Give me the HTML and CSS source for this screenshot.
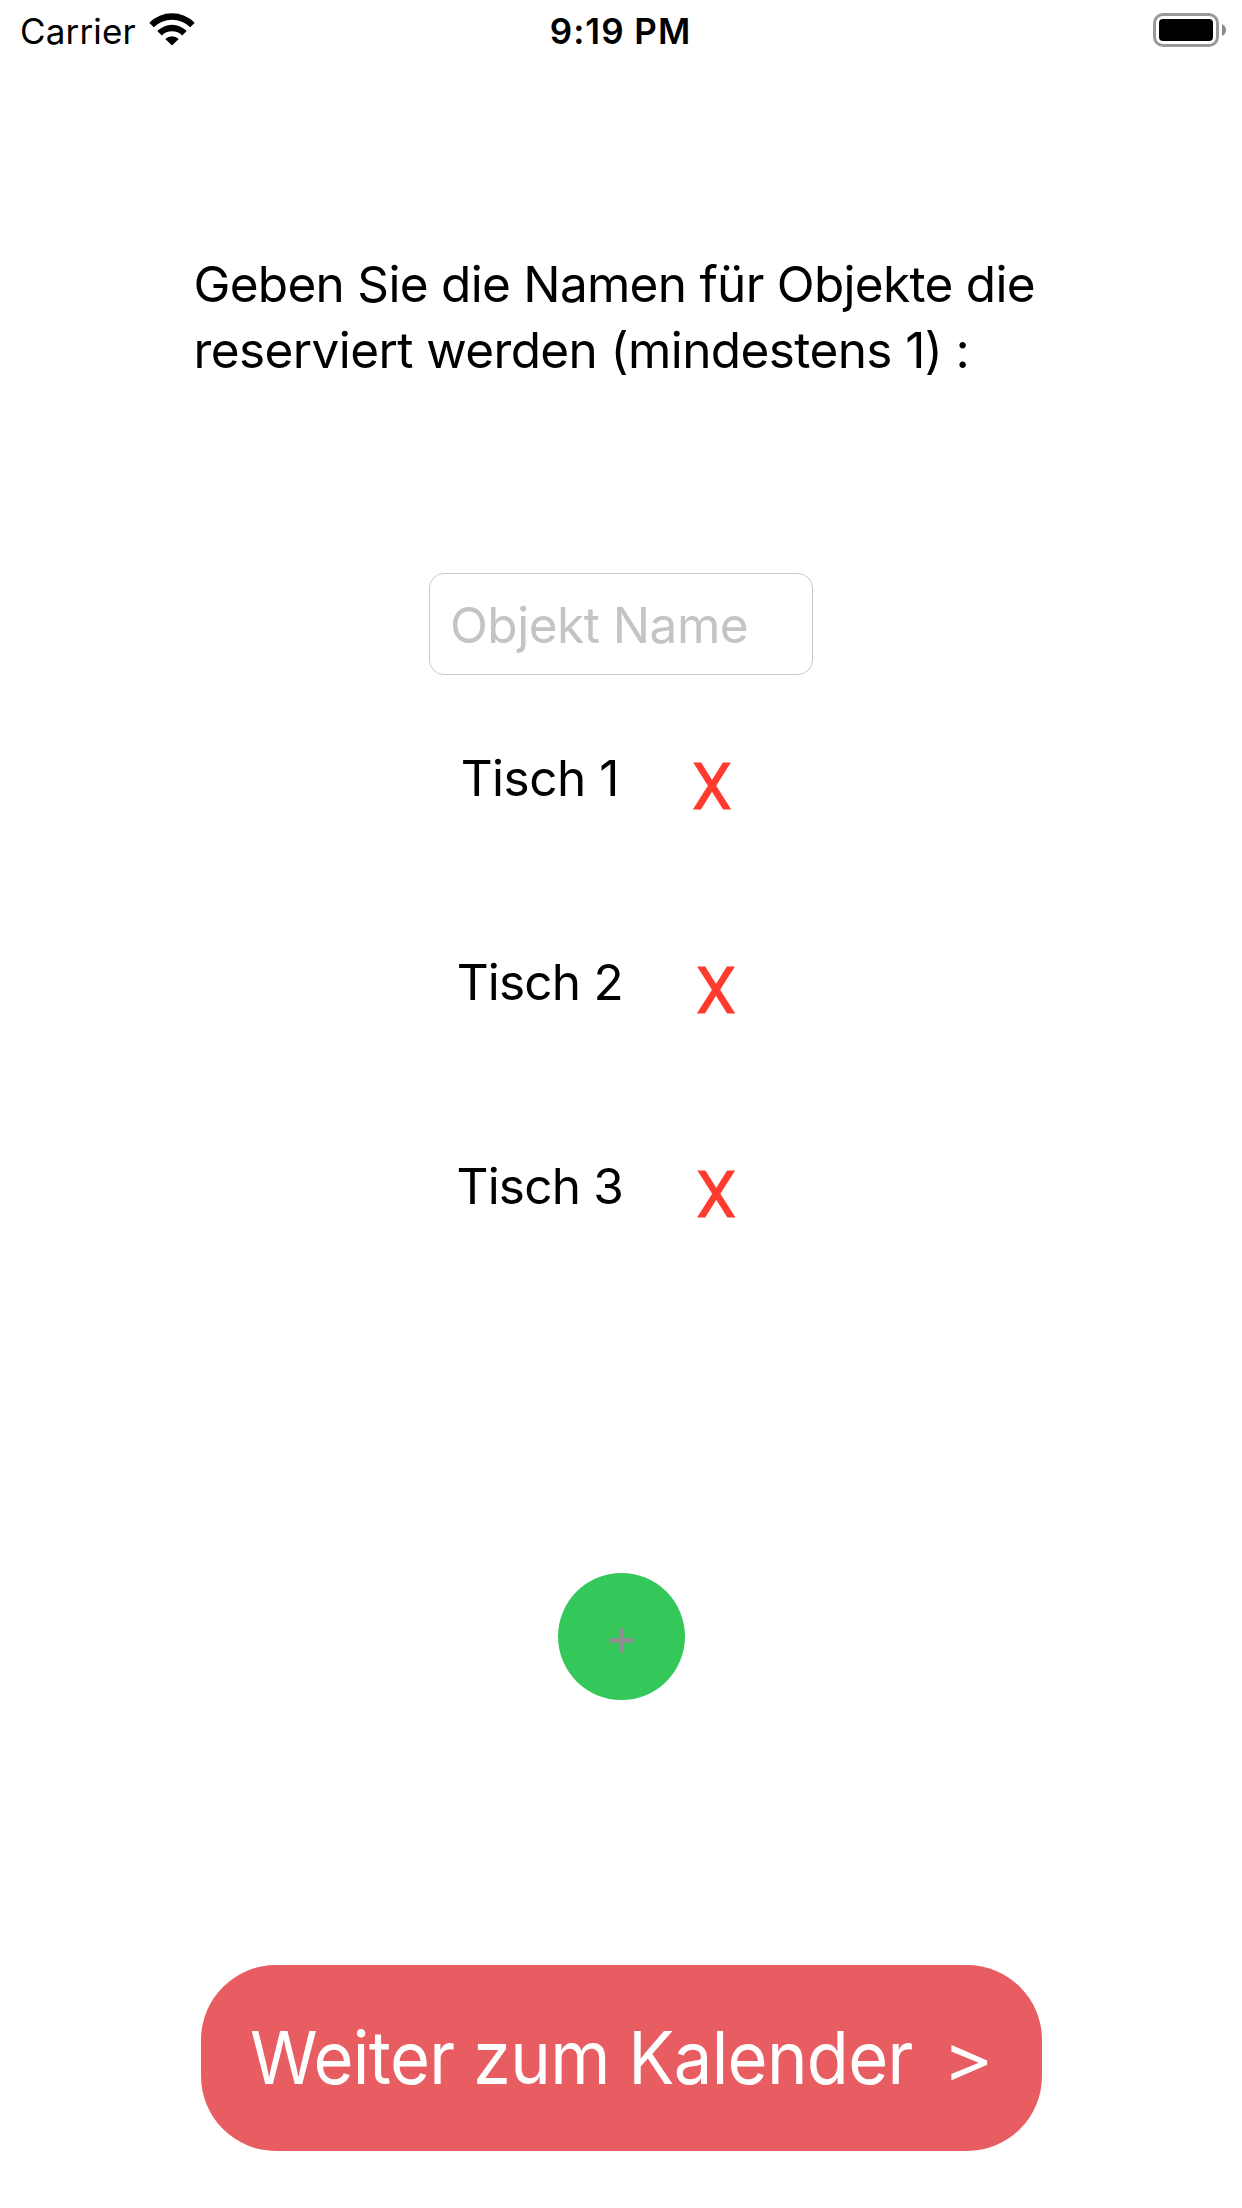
FILE: index.html
```html
<!DOCTYPE html>
<html lang="de">
<head>
<meta charset="utf-8">
<title>Objekte</title>
<link rel="stylesheet" href="styles.css">
</head>
<body>
<header class="status">
  <div class="status-left">
    <span class="carrier">Carrier</span>
    <svg class="wifi" width="46" height="33" viewBox="0 0 46 33">
      <path d="M0.3 9.8 A32 32 0 0 1 45.7 9.8 L41.2 14.3 A26 26 0 0 0 4.8 14.3 Z"/>
      <path d="M8.3 17.9 A20.8 20.8 0 0 1 37.7 17.9 L33.2 22.4 A14.5 14.5 0 0 0 12.8 22.4 Z"/>
      <path d="M16.3 25.9 A9.6 9.6 0 0 1 29.7 25.9 L23 32.6 Z"/>
    </svg>
  </div>
  <span class="time">9:19 PM</span>
  <svg class="battery" width="74" height="34" viewBox="0 0 74 34">
    <rect x="1.5" y="1.5" width="63" height="31" rx="8.5" fill="none" stroke="#999" stroke-width="3"/>
    <rect x="6" y="6" width="54" height="22" rx="4"/>
    <path d="M69 11 Q73 13 73 17 Q73 21 69 23 Z" fill="#8c8c8c"/>
  </svg>
</header>
<main class="content">
  <h1 class="prompt"><span class="line-one">Geben Sie die Namen für Objekte die</span><br><span class="line-two">reserviert werden (mindestens 1) :</span></h1>
  <input class="field" type="text" placeholder="Objekt Name">
  <ul class="list">
    <li class="row"><span class="name name-first">Tisch 1</span><button class="remove">X</button></li>
    <li class="row"><span class="name">Tisch 2</span><button class="remove">X</button></li>
    <li class="row"><span class="name">Tisch 3</span><button class="remove">X</button></li>
  </ul>
  <button class="add">+</button>
  <button class="next"><span class="label">Weiter zum Kalender</span><span class="arrow">&gt;</span></button>
</main>
</body>
</html>
```
FILE: styles.css
```css
* { box-sizing: border-box; margin: 0; padding: 0; }
body {
  width: 1242px;
  height: 2208px;
  background: #fff;
  color: #000;
  font-family: Inter, "Liberation Sans", sans-serif;
  font-size: 49.5px;
}
button { border: 0; background: none; font-family: inherit; }
.status {
  display: grid;
  grid-template-columns: 1fr auto 1fr;
  align-items: center;
  height: 60px;
  padding: 0 15px 0 20px;
  font-size: 35px;
  line-height: 56px;
}
.status-left { display: flex; align-items: center; gap: 13px; letter-spacing: 0.15px; }
.carrier, .time { padding-top: 2px; }
.wifi { margin-bottom: 1px; }
.time { font-weight: 600; letter-spacing: 1px; margin-right: 6px; }
.battery { justify-self: end; margin-bottom: 1px; }
.content { display: flex; flex-direction: column; align-items: center; }
.prompt {
  width: 855px;
  margin-top: 191px;
  font-size: inherit;
  font-weight: 400;
  line-height: 66px;
  white-space: nowrap;
}
.line-one { letter-spacing: -0.71px; }
.line-two { letter-spacing: -0.6px; }
.field {
  width: 384px;
  height: 102px;
  margin-top: 190px;
  padding: 2px 20px 0 20px;
  border: 1px solid #c8c8ca;
  border-radius: 15px;
  background: #fff;
  font: inherit;
  letter-spacing: -0.5px;
}
.field::placeholder { color: #c4c4c6; opacity: 1; }
.list { margin-top: 1px; list-style: none; }
.row {
  display: flex;
  align-items: center;
  justify-content: center;
  gap: 73px;
  height: 204px;
  padding-right: 49px;
}
.name { letter-spacing: -0.8px; }
.name-first { letter-spacing: -0.5px; }
.remove {
  margin-top: 18px;
  color: #ff3b30;
  font: 400 64.5px Roboto, sans-serif;
  -webkit-text-stroke: 0.8px #ff3b30;
}
.add {
  width: 127px;
  height: 127px;
  margin-top: 285px;
  padding-left: 1px;
  border-radius: 50%;
  background: #34c759;
  color: #8e8e93;
  font-size: 51px;
  font-weight: 500;
}
.next {
  display: flex;
  align-items: center;
  width: 841px;
  height: 186px;
  margin-top: 265px;
  padding: 0 0 1px 49px;
  border-radius: 75px;
  background: #e85d62;
  color: #fff;
  font-size: 73px;
}
.label {
  letter-spacing: -0.7px;
  white-space: nowrap;
  transform: scaleX(0.94);
  transform-origin: left;
}
.arrow { margin-left: -11px; transform: scale(1.06, 0.92); }
```
